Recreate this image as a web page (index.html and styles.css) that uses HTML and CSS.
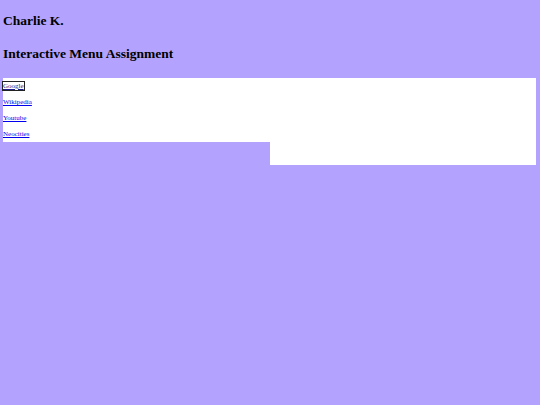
FILE: index.html
```html
<!DOCTYPE html>
<html>
<head>
<meta charset="utf-8">
<link rel="stylesheet" href="styles.css">
</head>
<body>
<h1 class="title">Charlie K.</h1>
<h1 class="title subtitle">Interactive Menu Assignment</h1>
<div class="panel">
  <nav class="menu">
    <a class="link focused" href="#">Google</a>
    <a class="link" href="#">Wikipedia</a>
    <a class="link" href="#">Youtube</a>
    <a class="link" href="#">Neocities</a>
  </nav>
  <div class="content"></div>
</div>
</body>
</html>
```
FILE: styles.css
```css
html, body {
  background: #b3a3ff;
}
body {
  margin: 0;
  padding: 13px 4px 0 3px;
  font-family: "Liberation Serif", "Times New Roman", serif;
  color: #000;
}
.title {
  font-size: 13.5px;
  line-height: 15px;
  font-weight: bold;
  margin: 0 0 18px 0;
}
.subtitle {
  margin-bottom: 17px;
}
.panel {
  display: flex;
  align-items: flex-start;
}
.menu {
  width: 267px;
  height: 64px;
  box-sizing: border-box;
  padding: 4px 0;
  background: #fff;
  display: flex;
  flex-direction: column;
  align-items: flex-start;
  gap: 8px;
}
.link {
  font-size: 7px;
  line-height: 8px;
  color: #0000ee;
  text-decoration: underline;
}
.focused {
  color: #1a1a8c;
  outline: 1px solid #222;
}
.content {
  flex: 1;
  height: 87px;
  background: #fff;
}
```
